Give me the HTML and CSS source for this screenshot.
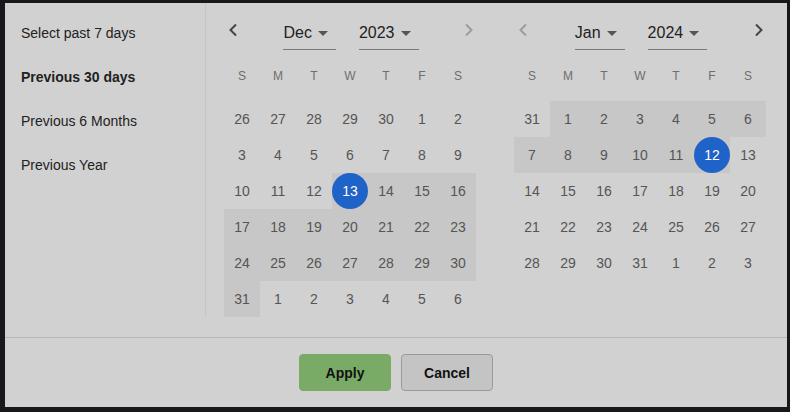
FILE: index.html
```html
<!DOCTYPE html>
<html>
<head>
<meta charset="utf-8">
<link rel="stylesheet" href="styles.css">
</head>
<body>
<div class="panel">
  <div class="main">
    <ul class="presets">
      <li>Select past 7 days</li>
      <li class="active">Previous 30 days</li>
      <li>Previous 6 Months</li>
      <li>Previous Year</li>
    </ul>
    <div class="calendars">
      <div class="cal">
        <div class="cal-head">
          <svg class="nav prev" width="16" height="16" viewBox="0 0 16 16"><path d="M11 2.5 L5.5 8 L11 13.5" fill="none" stroke="currentColor" stroke-width="2"/></svg>
          <div class="selects">
            <div class="sel"><span>Dec</span><svg class="caret" width="10" height="5" viewBox="0 0 10 5"><path d="M0 0 H10 L5 5 Z"/></svg></div>
            <div class="sel"><span>2023</span><svg class="caret" width="10" height="5" viewBox="0 0 10 5"><path d="M0 0 H10 L5 5 Z"/></svg></div>
          </div>
          <svg class="nav next disabled" width="16" height="16" viewBox="0 0 16 16"><path d="M5 2.5 L10.5 8 L5 13.5" fill="none" stroke="currentColor" stroke-width="2"/></svg>
        </div>
        <div class="weekdays"><span>S</span><span>M</span><span>T</span><span>W</span><span>T</span><span>F</span><span>S</span></div>
        <div class="days">
          <span>26</span><span>27</span><span>28</span><span>29</span><span>30</span><span>1</span><span>2</span>
          <span>3</span><span>4</span><span>5</span><span>6</span><span>7</span><span>8</span><span>9</span>
          <span>10</span><span>11</span><span>12</span><span class="range sel-day"><b>13</b></span><span class="range">14</span><span class="range">15</span><span class="range">16</span>
          <span class="range">17</span><span class="range">18</span><span class="range">19</span><span class="range">20</span><span class="range">21</span><span class="range">22</span><span class="range">23</span>
          <span class="range">24</span><span class="range">25</span><span class="range">26</span><span class="range">27</span><span class="range">28</span><span class="range">29</span><span class="range">30</span>
          <span class="range">31</span><span>1</span><span>2</span><span>3</span><span>4</span><span>5</span><span>6</span>
        </div>
      </div>
      <div class="cal">
        <div class="cal-head">
          <svg class="nav prev disabled" width="16" height="16" viewBox="0 0 16 16"><path d="M11 2.5 L5.5 8 L11 13.5" fill="none" stroke="currentColor" stroke-width="2"/></svg>
          <div class="selects">
            <div class="sel"><span>Jan</span><svg class="caret" width="10" height="5" viewBox="0 0 10 5"><path d="M0 0 H10 L5 5 Z"/></svg></div>
            <div class="sel"><span>2024</span><svg class="caret" width="10" height="5" viewBox="0 0 10 5"><path d="M0 0 H10 L5 5 Z"/></svg></div>
          </div>
          <svg class="nav next" width="16" height="16" viewBox="0 0 16 16"><path d="M5 2.5 L10.5 8 L5 13.5" fill="none" stroke="currentColor" stroke-width="2"/></svg>
        </div>
        <div class="weekdays"><span>S</span><span>M</span><span>T</span><span>W</span><span>T</span><span>F</span><span>S</span></div>
        <div class="days">
          <span>31</span><span class="range">1</span><span class="range">2</span><span class="range">3</span><span class="range">4</span><span class="range">5</span><span class="range">6</span>
          <span class="range">7</span><span class="range">8</span><span class="range">9</span><span class="range">10</span><span class="range">11</span><span class="range sel-day"><b>12</b></span><span>13</span>
          <span>14</span><span>15</span><span>16</span><span>17</span><span>18</span><span>19</span><span>20</span>
          <span>21</span><span>22</span><span>23</span><span>24</span><span>25</span><span>26</span><span>27</span>
          <span>28</span><span>29</span><span>30</span><span>31</span><span>1</span><span>2</span><span>3</span>
        </div>
      </div>
    </div>
  </div>
  <div class="footer">
    <button class="btn apply">Apply</button>
    <button class="btn cancel">Cancel</button>
  </div>
</div>
</body>
</html>
```

FILE: styles.css
```css
* { box-sizing: border-box; }
html, body { margin: 0; }
body {
  background: #16181c;
  padding: 3px 3px 5px 5px;
  font-family: "Liberation Sans", Arial, sans-serif;
  height: 412px;
  overflow: hidden;
}
.panel {
  width: 782px;
  height: 404px;
  background: #d1d1d1;
  display: flex;
  flex-direction: column;
}
.main {
  display: flex;
  align-items: flex-start;
  padding-bottom: 20px;
  border-bottom: 1px solid #b5b5b5;
}
.presets {
  list-style: none;
  margin: 0;
  padding: 8px 0 0 16px;
  width: 201px;
  height: 314px;
  border-right: 1px solid #c4c4c4;
  font-size: 14px;
  color: #222;
}
.presets li {
  height: 44px;
  line-height: 44px;
}
.presets li.active { font-weight: bold; }
.calendars {
  display: flex;
  gap: 38px;
  padding: 16px 21px 0 18px;
}
.cal { width: 252px; }
.cal-head {
  display: flex;
  align-items: flex-start;
  height: 31px;
}
.nav {
  color: #444;
  margin-top: 3px;
  flex: none;
}
.nav.prev { margin-left: 1px; }
.nav.next { margin-right: -1px; }
.nav.disabled { color: #9c9c9c; }
.selects {
  flex: 1;
  display: flex;
  justify-content: center;
  gap: 23px;
}
.sel {
  display: flex;
  align-items: center;
  padding: 4px 8px 6px 0;
  line-height: 20px;
  font-size: 16px;
  color: #222;
  border-bottom: 1px solid #7a7a7a;
}
.caret {
  margin-left: 6px;
  fill: #555;
  margin-top: 1px;
}
.weekdays {
  display: grid;
  grid-template-columns: repeat(7, 36px);
  margin: 16px 0 15px;
  line-height: 20px;
  font-size: 12px;
  color: #6e6e6e;
  text-align: center;
}
.days {
  display: grid;
  grid-template-columns: repeat(7, 36px);
  grid-auto-rows: 36px;
  font-size: 14px;
  color: #555;
}
.days span {
  display: flex;
  align-items: center;
  justify-content: center;
}
.days span.range { background: #c7c7c7; }
.days .sel-day b {
  width: 36px;
  height: 36px;
  border-radius: 50%;
  background: #1f62c8;
  color: #fff;
  font-weight: normal;
  display: flex;
  align-items: center;
  justify-content: center;
}
.footer {
  flex: 1;
  display: flex;
  justify-content: center;
  align-items: flex-start;
  gap: 10px;
  padding-top: 16px;
}
.btn {
  width: 92px;
  height: 37px;
  border-radius: 4px;
  font-family: "Liberation Sans", Arial, sans-serif;
  font-size: 14px;
  font-weight: bold;
  color: #111;
  padding: 0;
}
.apply {
  background: #79ab67;
  border: 1px solid #79ab67;
}
.cancel {
  background: #c4c4c4;
  border: 1px solid #9a9a9a;
}
```
